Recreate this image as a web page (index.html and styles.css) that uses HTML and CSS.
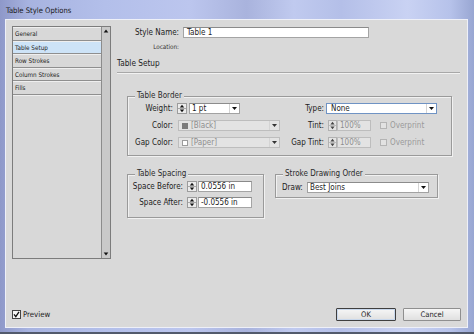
FILE: index.html
```html
<!DOCTYPE html>
<html>
<head>
<meta charset="utf-8">
<link rel="stylesheet" href="styles.css">
</head>
<body>
<div class="win">
  <div class="titlebar"><span class="title">Table Style Options</span></div>
  <div class="content">
    <div class="main">
      <div class="list">
        <div class="items">
          <div class="item">General</div>
          <div class="item sel">Table Setup</div>
          <div class="item">Row Strokes</div>
          <div class="item">Column Strokes</div>
          <div class="item">Fills</div>
          <div class="rest"></div>
        </div>
        <div class="scroll">
          <svg width="8" height="6" viewBox="0 0 8 6"><path d="M4 1.5 L6.3 4.5 H1.7Z" fill="#111"/></svg>
          <svg width="8" height="6" viewBox="0 0 8 6"><path d="M4 4.5 L6.3 1.5 H1.7Z" fill="#111"/></svg>
        </div>
      </div>
      <div class="panel">
        <div class="name-row">
          <span class="name-lbl">Style Name:</span>
          <div class="field name-field">Table 1</div>
        </div>
        <div class="loc">Location:</div>
        <div class="section-title">Table Setup</div>
        <div class="sep"></div>

        <div class="group border-group">
          <div class="legend">Table Border</div>
          <div class="tb-row first">
            <span class="c1">Weight:</span>
            <div class="c2">
              <svg class="spin" width="10" height="11" viewBox="0 0 10 11"><rect x="0.5" y="0.5" width="9" height="10" fill="#ececec" stroke="#9c9c9c"/><line x1="1" y1="5.5" x2="9" y2="5.5" stroke="#a8a8a8"/><path d="M5 1.8 L7.2 4.4 H2.8Z" fill="#111"/><path d="M5 9.2 L7.2 6.6 H2.8Z" fill="#111"/></svg>
              <div class="dd dd-weight"><span class="dd-text">1 pt</span><span class="dd-arrow"><svg width="5" height="3" viewBox="0 0 5 3"><path d="M0 0H5L2.5 3Z" fill="#111"/></svg></span></div>
            </div>
            <span class="c3">Type:</span>
            <div class="c4">
              <div class="dd dd-type"><span class="dd-text">None</span><span class="dd-arrow"><svg width="5" height="3" viewBox="0 0 5 3"><path d="M0 0H5L2.5 3Z" fill="#111"/></svg></span></div>
            </div>
          </div>
          <div class="tb-row">
            <span class="c1">Color:</span>
            <div class="c2">
              <div class="dd dd-color disabled"><span class="swatch black"></span><span class="dd-text">[Black]</span><span class="dd-arrow"><svg width="5" height="3" viewBox="0 0 5 3"><path d="M0 0H5L2.5 3Z" fill="#333"/></svg></span></div>
            </div>
            <span class="c3">Tint:</span>
            <div class="c4">
              <svg class="spin tint-spin" width="9" height="11" viewBox="0 0 9 11"><rect x="0.5" y="0.5" width="8" height="10" fill="#e4e4e4" stroke="#b2b2b2"/><line x1="1" y1="5.5" x2="8" y2="5.5" stroke="#bcbcbc"/><path d="M4.5 1.8 L6.6 4.4 H2.4Z" fill="#444"/><path d="M4.5 9.2 L6.6 6.6 H2.4Z" fill="#444"/></svg>
              <div class="field tint-field disabled">100%</div>
              <span class="cb"></span><span class="cb-text">Overprint</span>
            </div>
          </div>
          <div class="tb-row">
            <span class="c1">Gap Color:</span>
            <div class="c2">
              <div class="dd dd-color disabled"><span class="swatch paper"></span><span class="dd-text">[Paper]</span><span class="dd-arrow"><svg width="5" height="3" viewBox="0 0 5 3"><path d="M0 0H5L2.5 3Z" fill="#333"/></svg></span></div>
            </div>
            <span class="c3">Gap Tint:</span>
            <div class="c4">
              <svg class="spin tint-spin" width="9" height="11" viewBox="0 0 9 11"><rect x="0.5" y="0.5" width="8" height="10" fill="#e4e4e4" stroke="#b2b2b2"/><line x1="1" y1="5.5" x2="8" y2="5.5" stroke="#bcbcbc"/><path d="M4.5 1.8 L6.6 4.4 H2.4Z" fill="#444"/><path d="M4.5 9.2 L6.6 6.6 H2.4Z" fill="#444"/></svg>
              <div class="field tint-field disabled">100%</div>
              <span class="cb"></span><span class="cb-text">Overprint</span>
            </div>
          </div>
        </div>

        <div class="groups-row">
          <div class="group spacing-group">
            <div class="legend">Table Spacing</div>
            <div class="sp-row first">
              <span class="sp-lbl">Space Before:</span>
              <svg class="spin" width="10" height="11" viewBox="0 0 10 11"><rect x="0.5" y="0.5" width="9" height="10" fill="#ececec" stroke="#9c9c9c"/><line x1="1" y1="5.5" x2="9" y2="5.5" stroke="#a8a8a8"/><path d="M5 1.8 L7.2 4.4 H2.8Z" fill="#111"/><path d="M5 9.2 L7.2 6.6 H2.8Z" fill="#111"/></svg>
              <div class="field sp-field">0.0556 in</div>
            </div>
            <div class="sp-row">
              <span class="sp-lbl">Space After:</span>
              <svg class="spin" width="10" height="11" viewBox="0 0 10 11"><rect x="0.5" y="0.5" width="9" height="10" fill="#ececec" stroke="#9c9c9c"/><line x1="1" y1="5.5" x2="9" y2="5.5" stroke="#a8a8a8"/><path d="M5 1.8 L7.2 4.4 H2.8Z" fill="#111"/><path d="M5 9.2 L7.2 6.6 H2.8Z" fill="#111"/></svg>
              <div class="field sp-field">-0.0556 in</div>
            </div>
          </div>
          <div class="group order-group">
            <div class="legend">Stroke Drawing Order</div>
            <div class="od-row">
              <span class="od-lbl">Draw:</span>
              <div class="dd dd-draw"><span class="dd-text">Best Joins</span><span class="dd-arrow"><svg width="5" height="3" viewBox="0 0 5 3"><path d="M0 0H5L2.5 3Z" fill="#111"/></svg></span></div>
            </div>
          </div>
        </div>
      </div>
    </div>
    <div class="footer">
      <svg class="check" width="9" height="9" viewBox="0 0 9 9"><rect x="0.5" y="0.5" width="8" height="8" fill="#f7f7f7" stroke="#444"/><path d="M2 4.3 L3.8 6.6 L7 1.8" fill="none" stroke="#111" stroke-width="1.3"/></svg>
      <span class="preview">Preview</span>
      <button class="btn ok">OK</button>
      <button class="btn cancel">Cancel</button>
    </div>
  </div>
</div>
</body>
</html>
```
FILE: styles.css
```css
* { box-sizing: border-box; }
html, body { margin: 0; padding: 0; }
body {
  background: #4f5668;
  font-family: "DejaVu Sans", "Liberation Sans", sans-serif;
  font-stretch: condensed;
  font-size: 8px;
  color: #1c1c1c;
}
.win {
  width: 474px;
  height: 334px;
  display: flex;
  flex-direction: column;
  overflow: hidden;
  background: linear-gradient(90deg, #8e98c9 0%, #a7b3e0 6%, #b3bfea 22%, #bcc6ee 40%, #a9b3dd 52%, #c0caef 62%, #b4bfe8 72%, #c9d2f3 86%, #b6c2ea 95%, #98a6d2 100%);
  border-bottom: 2px solid #525a6c;
}
.titlebar {
  height: 20px;
  flex: none;
  display: flex;
  align-items: center;
  padding-left: 6px;
}
.title { font-size: 7.6px; color: #1a1a1a; }
.content {
  margin-left: 6px;
  width: 461px;
  height: 307px;
  flex: none;
  background: #d9d9d9;
  box-shadow: 0 0 0 1px #eef0f8;
  display: flex;
  flex-direction: column;
}
.main {
  display: flex;
  padding: 6px 0 0 6px;
}
/* list */
.list {
  width: 99px;
  height: 233px;
  border: 1px solid #7c7c7c;
  display: flex;
  background: #d8d8d8;
}
.items { flex: 1; display: flex; flex-direction: column; }
.item {
  height: 13.6px;
  line-height: 13px;
  padding-left: 2px;
  font-size: 6.3px;
  color: #222;
  border-bottom: 1px solid #8f8f8f;
  box-shadow: inset 0 1px 0 #efefef;
}
.item.sel { background: #cde3f7; }
.rest { flex: 1; box-shadow: inset 0 1px 0 #efefef; }
.scroll {
  width: 9px;
  border-left: 1px solid #8c8c8c;
  background: #c9c9c9;
  display: flex;
  flex-direction: column;
  justify-content: space-between;
  align-items: center;
  padding: 1px 0 1px;
}
/* panel */
.panel { flex: 1; display: flex; flex-direction: column; }
.name-row { display: flex; align-items: center; margin-top: 1px; height: 11px; }
.name-lbl { width: 68px; text-align: right; }
.field {
  height: 11px;
  line-height: 9px;
  background: #fff;
  border: 1px solid #a4a4a4;
  border-top-color: #8a8a8a;
  padding-left: 2px;
  white-space: nowrap;
}
.name-field { margin-left: 4px; width: 186px; padding-left: 3px; }
.loc {
  width: 68px;
  text-align: right;
  font-size: 6.3px;
  height: 8px;
  line-height: 8px;
  margin-top: 5px;
  color: #333;
}
.section-title {
  margin: 7px 0 0 6px;
  height: 10px;
  line-height: 10px;
  font-size: 8.2px;
}
.sep {
  margin: 4px 0 0 6px;
  width: 343px;
  height: 2px;
  border-top: 1px solid #a8a8a8;
  border-bottom: 1px solid #f2f2f2;
}
.group {
  border: 1px solid #9a9a9a;
  box-shadow: inset 1px 1px 0 #f1f1f1, 1px 1px 0 #f1f1f1;
}
.legend {
  height: 10px;
  line-height: 10px;
  margin: -6px 0 0 7px;
  padding: 0 2px;
  background: #d9d9d9;
  align-self: flex-start;
  color: #2a2a2a;
}
.border-group {
  margin: 22px 0 0 16px;
  width: 325px;
  height: 60px;
  display: flex;
  flex-direction: column;
}
.tb-row { display: flex; align-items: center; height: 11px; margin-top: 6px; }
.tb-row.first { margin-top: 2px; }
.c1 { width: 45px; text-align: right; white-space: nowrap; }
.c2 { width: 107px; display: flex; align-items: center; }
.c3 { width: 44px; text-align: right; white-space: nowrap; }
.c4 { display: flex; align-items: center; }
.spin { display: block; flex: none; }
.c2 .spin { margin-left: 4px; }
.tint-spin { margin-left: 4px; }
.dd {
  height: 11px;
  display: flex;
  align-items: center;
  background: #fff;
  border: 1px solid #a2a2a2;
  border-top-color: #8c8c8c;
}
.dd-text { flex: 1; padding-left: 2px; white-space: nowrap; line-height: 9px; }
.dd-arrow {
  width: 10px;
  height: 9px;
  display: flex;
  align-items: center;
  justify-content: center;
  border-left: 1px solid #d4d4d4;
}
.dd-arrow svg { display: block; }
.dd-weight { margin-left: 2px; width: 51px; }
.dd-weight .dd-text { padding-left: 2px; }
.dd-type { margin-left: 2px; width: 111px; border-color: #6f93c4; }
.dd-type .dd-text { padding-left: 4px; }
.dd-color { margin-left: 5px; width: 102px; }
.disabled { background: #e3e3e3; color: #8e8e8e; border-color: #bdbdbd; }
.swatch { width: 6px; height: 6px; margin-left: 3px; flex: none; }
.swatch.black { background: #7b7b7b; }
.swatch.paper { background: #fff; border: 1px solid #9c9c9c; }
.dd-color .dd-text { padding-left: 3px; }
.tint-field { width: 34px; }
.cb {
  width: 7px;
  height: 7px;
  margin-left: 9px;
  border: 1px solid #b4b4b4;
  background: #e2e2e2;
  flex: none;
}
.cb-text { margin-left: 3px; color: #9a9a9a; }
.groups-row { display: flex; align-items: flex-start; margin: 18px 0 0 16px; }
.spacing-group {
  width: 137px;
  height: 44px;
  display: flex;
  flex-direction: column;
}
.sp-row { display: flex; align-items: center; height: 11px; margin-top: 5px; }
.sp-row.first { margin-top: 2px; }
.sp-lbl { width: 55px; text-align: right; white-space: nowrap; }
.sp-row .spin { margin-left: 4px; }
.sp-field { margin-left: 1px; width: 54px; }
.order-group {
  margin-left: 11px;
  width: 163px;
  height: 24px;
  display: flex;
  flex-direction: column;
}
.od-row { display: flex; align-items: center; height: 11px; margin-top: 3px; padding-left: 6px; }
.od-lbl { width: 25px; }
.dd-draw { width: 122px; }
/* footer */
.footer {
  margin-top: auto;
  display: flex;
  align-items: center;
  padding: 0 6px 6px 6px;
}
.check { display: block; }
.preview { margin-left: 2px; font-size: 7.8px; }
.btn {
  height: 13px;
  font-family: inherit;
  font-stretch: condensed;
  font-size: 7.6px;
  color: #1c1c1c;
  padding: 0;
  background: linear-gradient(#f6f6f6, #e0e0e0);
  border: 1px solid #8f8f8f;
  border-radius: 1px;
}
.ok { margin-left: auto; width: 60px; border-color: #3f3f3f; box-shadow: inset 0 0 0 1px #c9d8ec; }
.cancel { margin-left: 7px; width: 58px; }
```
